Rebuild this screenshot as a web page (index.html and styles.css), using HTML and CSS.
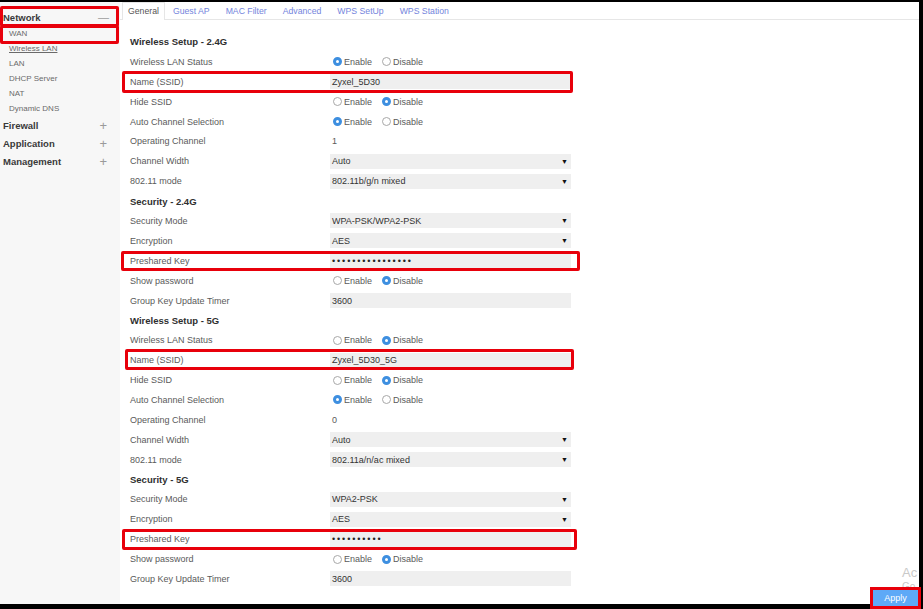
FILE: index.html
```html
<!DOCTYPE html>
<html>
<head>
<meta charset="utf-8">
<link rel="stylesheet" href="styles.css">
</head>
<body>
<div class="frame">
  <div class="page">
    <aside class="sidebar">
      <div class="nav-head mark-a"><span>Network</span><span class="sign">—</span></div>
      <div class="nav-sub mark-b">WAN</div>
      <div class="nav-sub link">Wireless LAN</div>
      <div class="nav-sub">LAN</div>
      <div class="nav-sub">DHCP Server</div>
      <div class="nav-sub">NAT</div>
      <div class="nav-sub">Dynamic DNS</div>
      <div class="nav-head tall"><span>Firewall</span><span class="sign plus">+</span></div>
      <div class="nav-head tall"><span>Application</span><span class="sign plus">+</span></div>
      <div class="nav-head tall"><span>Management</span><span class="sign plus">+</span></div>
    </aside>
    <main class="main">
      <nav class="tabs">
        <span class="tab active">General</span>
        <span class="tab">Guest AP</span>
        <span class="tab">MAC Filter</span>
        <span class="tab">Advanced</span>
        <span class="tab">WPS SetUp</span>
        <span class="tab">WPS Station</span>
      </nav>
      <div class="form">
        <div class="row head">Wireless Setup - 2.4G</div>
        <div class="row"><span class="label">Wireless LAN Status</span><span class="value"><span class="opt"><i class="radio on"></i>Enable</span><span class="opt"><i class="radio"></i>Disable</span></span></div>
        <div class="row mark mark-1"><span class="label">Name (SSID)</span><span class="value"><span class="field">Zyxel_5D30</span></span></div>
        <div class="row"><span class="label">Hide SSID</span><span class="value"><span class="opt"><i class="radio"></i>Enable</span><span class="opt"><i class="radio on"></i>Disable</span></span></div>
        <div class="row"><span class="label">Auto Channel Selection</span><span class="value"><span class="opt"><i class="radio on"></i>Enable</span><span class="opt"><i class="radio"></i>Disable</span></span></div>
        <div class="row"><span class="label">Operating Channel</span><span class="value"><span class="plain">1</span></span></div>
        <div class="row"><span class="label">Channel Width</span><span class="value"><span class="field select">Auto<b>▼</b></span></span></div>
        <div class="row"><span class="label">802.11 mode</span><span class="value"><span class="field select">802.11b/g/n mixed<b>▼</b></span></span></div>
        <div class="row head">Security - 2.4G</div>
        <div class="row"><span class="label">Security Mode</span><span class="value"><span class="field select">WPA-PSK/WPA2-PSK<b>▼</b></span></span></div>
        <div class="row"><span class="label">Encryption</span><span class="value"><span class="field select">AES<b>▼</b></span></span></div>
        <div class="row mark mark-2"><span class="label">Preshared Key</span><span class="value"><span class="field dots">••••••••••••••••</span></span></div>
        <div class="row"><span class="label">Show password</span><span class="value"><span class="opt"><i class="radio"></i>Enable</span><span class="opt"><i class="radio on"></i>Disable</span></span></div>
        <div class="row"><span class="label">Group Key Update Timer</span><span class="value"><span class="field">3600</span></span></div>
        <div class="row head">Wireless Setup - 5G</div>
        <div class="row"><span class="label">Wireless LAN Status</span><span class="value"><span class="opt"><i class="radio"></i>Enable</span><span class="opt"><i class="radio on"></i>Disable</span></span></div>
        <div class="row mark mark-3"><span class="label">Name (SSID)</span><span class="value"><span class="field">Zyxel_5D30_5G</span></span></div>
        <div class="row"><span class="label">Hide SSID</span><span class="value"><span class="opt"><i class="radio"></i>Enable</span><span class="opt"><i class="radio on"></i>Disable</span></span></div>
        <div class="row"><span class="label">Auto Channel Selection</span><span class="value"><span class="opt"><i class="radio on"></i>Enable</span><span class="opt"><i class="radio"></i>Disable</span></span></div>
        <div class="row"><span class="label">Operating Channel</span><span class="value"><span class="plain">0</span></span></div>
        <div class="row"><span class="label">Channel Width</span><span class="value"><span class="field select">Auto<b>▼</b></span></span></div>
        <div class="row"><span class="label">802.11 mode</span><span class="value"><span class="field select">802.11a/n/ac mixed<b>▼</b></span></span></div>
        <div class="row head">Security - 5G</div>
        <div class="row"><span class="label">Security Mode</span><span class="value"><span class="field select">WPA2-PSK<b>▼</b></span></span></div>
        <div class="row"><span class="label">Encryption</span><span class="value"><span class="field select">AES<b>▼</b></span></span></div>
        <div class="row mark mark-4"><span class="label">Preshared Key</span><span class="value"><span class="field dots">••••••••••</span></span></div>
        <div class="row"><span class="label">Show password</span><span class="value"><span class="opt"><i class="radio"></i>Enable</span><span class="opt"><i class="radio on"></i>Disable</span></span></div>
        <div class="row"><span class="label">Group Key Update Timer</span><span class="value"><span class="field">3600</span></span></div>
      </div>
    </main>
    <div class="watermark"><div class="wm1">Ac</div><div class="wm2">Go</div></div>
  </div>
  <button class="apply">Apply</button>
</div>
</body>
</html>
```

FILE: styles.css
```css
* { box-sizing: border-box; }
html, body { margin: 0; padding: 0; }
body {
  width: 923px;
  height: 609px;
  background: #000;
  font-family: "Liberation Sans", Arial, sans-serif;
  overflow: hidden;
}
.frame {
  position: relative;
  width: 923px;
  height: 609px;
  padding: 2px 4px 5px 0;
}
.page {
  position: relative;
  display: flex;
  width: 100%;
  height: 100%;
  background: #fff;
  overflow: hidden;
}
.sidebar {
  width: 120px;
  flex: none;
  background: #f7f7f7;
  padding-top: 6px;
}
.nav-head {
  position: relative;
  display: flex;
  justify-content: space-between;
  align-items: center;
  height: 18px;
  padding: 0 11px 0 3px;
  font-size: 9.5px;
  font-weight: bold;
  color: #3a3a3a;
}
.sign { color: #9a9a9a; font-weight: normal; font-size: 11px; }
.sign.plus { font-size: 13px; margin-right: 2px; }
.nav-sub {
  position: relative;
  height: 15px;
  line-height: 15px;
  padding-left: 9px;
  font-size: 8px;
  color: #6a6a6a;
}
.nav-sub.link { text-decoration: underline; }
.mark-a::after, .mark-b::after, .mark::after {
  content: "";
  position: absolute;
  border: 3px solid #e8000b;
  border-radius: 2px;
  pointer-events: none;
}
.mark-a::after { left: 0; right: 1px; top: -2px; bottom: -1px; }
.mark-b::after { left: 0; right: 1px; top: -1px; bottom: -3px; }

.main {
  flex: 1;
  display: flex;
  flex-direction: column;
}
.tabs {
  display: flex;
  height: 18px;
  border-bottom: 1px solid #e6e6e6;
  padding-left: 2px;
}
.tab {
  padding: 0 7px;
  font-size: 8.7px;
  line-height: 17px;
  color: #7384dc;
  border: 1px solid transparent;
  border-bottom: none;
}
.tab.active {
  color: #555;
  border-color: #e6e6e6;
  background: #fff;
  height: 18px;
  margin-bottom: -1px;
  padding: 0 5px;
}
.form {
  padding: 12px 0 0 10px;
  width: 451px;
}
.row {
  position: relative;
  display: flex;
  align-items: center;
  height: 19.9px;
  font-size: 9px;
  color: #5a5a5a;
}
.row.head {
  font-weight: bold;
  font-size: 9.5px;
  color: #2f2f2f;
}
.label { width: 200px; flex: none; }
.value { flex: 1; display: flex; align-items: center; }
.opt { display: inline-flex; align-items: center; margin-right: 10px; margin-left: 3px; }
.opt + .opt { margin-left: 0; }
.radio {
  display: inline-block;
  width: 9px;
  height: 9px;
  border-radius: 50%;
  border: 1px solid #a8a8a8;
  margin-right: 2px;
  background: #fff;
}
.radio.on {
  border: 3px solid #3e8fe0;
  background: #fff;
}
.field {
  display: flex;
  align-items: center;
  width: 241px;
  height: 15px;
  background: #efefef;
  padding: 0 3px 0 2px;
  color: #333;
}
.select { justify-content: space-between; }
.select b { font-size: 7px; color: #111; font-weight: normal; }
.dots { letter-spacing: 1.9px; font-size: 9px; color: #222; }
.plain { padding-left: 2px; }
.mark-1::after { left: -8px; right: -2px; top: -1px; bottom: -1px; }
.mark-2::after { left: -9px; right: -9px; top: 0; bottom: 0; }
.mark-3::after { left: -5px; right: -3px; top: -1px; bottom: 0; }
.mark-4::after { left: -8px; right: -6px; top: 0; bottom: -1px; }

.watermark {
  position: absolute;
  left: 902px;
  top: 563px;
  white-space: nowrap;
  color: #c9c9c9;
  line-height: 1.2;
}
.wm1 { font-size: 13px; }
.wm2 { font-size: 10px; }
.apply {
  position: absolute;
  left: 870px;
  top: 587px;
  width: 51px;
  height: 22px;
  border: 3px solid #e8000b;
  background: #5ea9f7;
  color: #fff;
  font-family: "Liberation Sans", Arial, sans-serif;
  font-size: 9px;
  padding: 0;
}
```
